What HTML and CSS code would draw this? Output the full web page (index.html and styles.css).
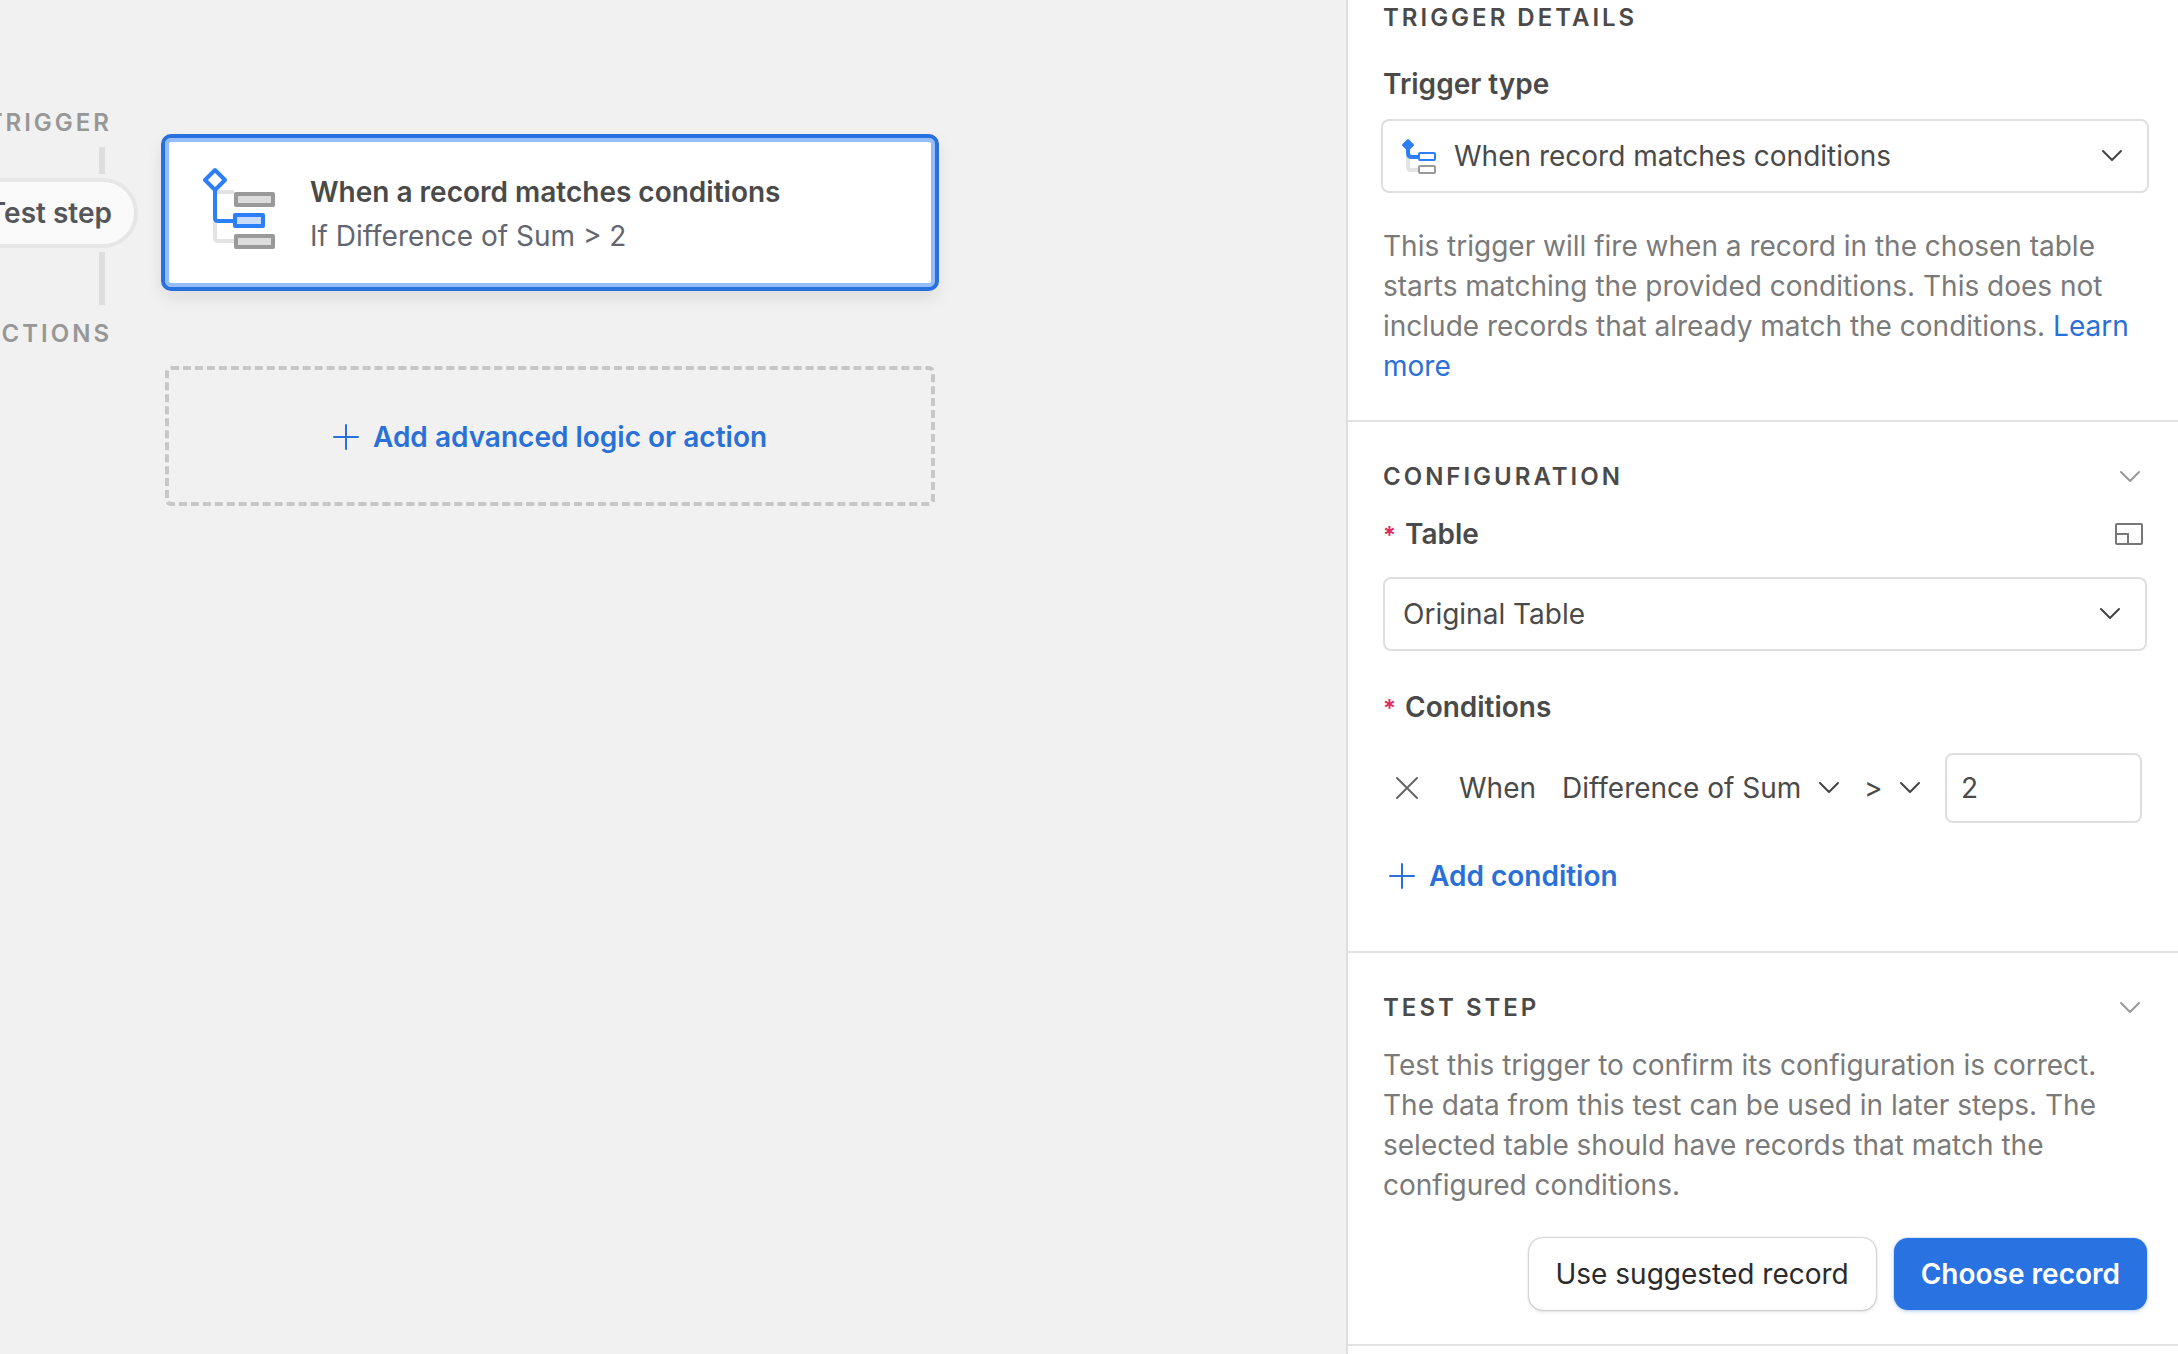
FILE: index.html
```
<!DOCTYPE html>
<html lang="en">
<head>
    <meta charset="UTF-8">
    <meta name="viewport" content="width=device-width, initial-scale=1.0">
    <title>Automation</title>
    <link rel="stylesheet" href="styles.css">
</head>
<body>
    <main class="canvas">
      <div class="rail">
        <span class="rail-label">TRIGGER</span>
        <div class="rail-line"></div>
        <button type="button" class="test-step">Test step</button>
        <div class="rail-line rail-line-long"></div>
        <span class="rail-label">ACTIONS</span>
      </div>
      <div class="steps">
        <button type="button" class="step-card">
          <svg class="step-icon" width="78" height="93" viewBox="0 0 78 93" fill="none">
            <path d="M15 26H34M15 26V72Q15 75 18 75H34" stroke="#e3e3e3" stroke-width="4"/>
            <path d="M15 24V52Q15 55 18 55H34" stroke="#2d7ff9" stroke-width="4"/>
            <path d="M15 4L25 14L15 24L5 14Z" fill="#fff" stroke="#2d7ff9" stroke-width="4" stroke-linejoin="round"/>
            <rect x="36" y="28" width="37" height="11" fill="#dcdcdc" stroke="#999" stroke-width="4" stroke-linejoin="round"/>
            <rect x="35" y="49" width="28" height="11" fill="#c9dcfd" stroke="#2d7ff9" stroke-width="4" stroke-linejoin="round"/>
            <rect x="36" y="70" width="37" height="11" fill="#dcdcdc" stroke="#999" stroke-width="4" stroke-linejoin="round"/>
          </svg>
          <span class="step-text">
            <span class="step-title">When a record matches conditions</span>
            <span class="step-detail">If Difference of Sum &gt; 2</span>
          </span>
        </button>
        <button type="button" class="add-action">
          <svg width="26" height="26" viewBox="0 0 26 26"><path d="M13 1V25M1 13H25" stroke="currentColor" stroke-width="2" stroke-linecap="round"/></svg>
          Add advanced logic or action
        </button>
      </div>
    </main>

    <aside class="panel">
      <section class="section section-first">
        <h2 class="section-title">TRIGGER DETAILS</h2>
        <label class="field-label trigger-label" for="trigger-type">Trigger type</label>
        <div class="select-box trigger-box">
          <svg class="trigger-icon" width="38" height="42" viewBox="0 0 38 42" fill="none">
            <path d="M9 20V32Q9 35 12 35H20" stroke="#e3e3e3" stroke-width="4"/>
            <path d="M9 10V18Q9 22 13 22H20" stroke="#2d7ff9" stroke-width="4"/>
            <path d="M9 5L14 10L9 15L4 10Z" fill="#2d7ff9" stroke="#2d7ff9" stroke-width="2" stroke-linejoin="round"/>
            <rect x="20" y="18" width="16" height="7" rx="1" fill="#fff" stroke="#2d7ff9" stroke-width="2"/>
            <rect x="20" y="31" width="16" height="7" rx="1" fill="#fff" stroke="#999" stroke-width="2"/>
          </svg>
          <select id="trigger-type" class="select">
            <option>When record matches conditions</option>
          </select>
          <svg class="chevron" width="22" height="14" viewBox="0 0 22 14"><path d="M2 2L11 11L20 2"/></svg>
        </div>
        <p class="help">This trigger will fire when a record in the chosen table starts matching the provided conditions. This does not include records that already match the conditions. <a class="link" href="#">Learn more</a></p>
      </section>

      <section class="section">
        <div class="section-head">
          <h2 class="section-title">CONFIGURATION</h2>
          <button type="button" class="icon-button" aria-label="Collapse configuration">
            <svg class="chevron-light" width="22" height="14" viewBox="0 0 22 14"><path d="M2 2L11 11L20 2"/></svg>
          </button>
        </div>
        <div class="field-head">
          <label class="field-label" for="table"><span class="required">*</span>Table</label>
          <button type="button" class="icon-button icon-expand" aria-label="Expand table">
            <svg width="30" height="24" viewBox="0 0 30 24" fill="none" stroke="#777" stroke-width="2"><rect x="2" y="2" width="26" height="20" rx="1"/><path d="M2 12H14V22"/></svg>
          </button>
        </div>
        <div class="select-box table-box">
          <select id="table" class="select">
            <option>Original Table</option>
          </select>
          <svg class="chevron" width="22" height="14" viewBox="0 0 22 14"><path d="M2 2L11 11L20 2"/></svg>
        </div>
        <div class="field-label conditions-label"><span class="required">*</span>Conditions</div>
        <div class="condition">
          <button type="button" class="icon-button remove" aria-label="Remove condition">
            <svg width="24" height="24" viewBox="0 0 24 24"><path d="M2 2L22 22M22 2L2 22" stroke="#666" stroke-width="2" stroke-linecap="round"/></svg>
          </button>
          <span class="when">When</span>
          <div class="inline-box">
            <select class="inline-select" aria-label="Field">
              <option>Difference of Sum</option>
            </select>
            <svg class="chevron chevron-inline" width="22" height="14" viewBox="0 0 22 14"><path d="M2 2L11 11L20 2"/></svg>
          </div>
          <div class="inline-box">
            <select class="inline-select" aria-label="Operator">
              <option>&gt;</option>
            </select>
            <svg class="chevron chevron-inline" width="22" height="14" viewBox="0 0 22 14"><path d="M2 2L11 11L20 2"/></svg>
          </div>
          <input class="value" type="text" aria-label="Value" value="2">
        </div>
        <button type="button" class="add-condition">
          <svg width="26" height="26" viewBox="0 0 26 26"><path d="M13 1V25M1 13H25" stroke="currentColor" stroke-width="2" stroke-linecap="round"/></svg>
          Add condition
        </button>
      </section>

      <section class="section section-test">
        <div class="section-head">
          <h2 class="section-title">TEST STEP</h2>
          <button type="button" class="icon-button" aria-label="Collapse test step">
            <svg class="chevron-light" width="22" height="14" viewBox="0 0 22 14"><path d="M2 2L11 11L20 2"/></svg>
          </button>
        </div>
        <p class="help test-help">Test this trigger to confirm its configuration is correct. The data from this test can be used in later steps. The selected table should have records that match the configured conditions.</p>
        <div class="buttons">
          <button type="button" class="button">Use suggested record</button>
          <button type="button" class="button button-primary">Choose record</button>
        </div>
      </section>
    </aside>
</body>
</html>
```
FILE: styles.css
```
* {
  box-sizing: border-box;
}

body {
  display: flex;
  min-height: 100vh;
  margin: 0;
  overflow: hidden;
  background-color: #f1f1f1;
  color: #4a4a4a;
  font-family: Inter, "Liberation Sans", sans-serif;
  font-size: 28px;
  line-height: 40px;
}

button,
input,
select {
  margin: 0;
  padding: 0;
  border: none;
  background: none;
  color: inherit;
  font: inherit;
}

button {
  cursor: pointer;
}

svg {
  display: block;
  flex: none;
}

/* ------CANVAS------- */
.canvas {
  display: flex;
  flex: 1;
  align-items: flex-start;
  gap: 23px;
  min-width: 0;
}

.rail {
  display: flex;
  flex: none;
  flex-direction: column;
  align-items: flex-end;
  width: 138px;
  padding-top: 111px;
}

.rail-label {
  margin-right: 26px;
  color: #979797;
  font-size: 24px;
  font-weight: 600;
  line-height: 24px;
  letter-spacing: 3px;
}

.rail-line {
  width: 6px;
  height: 27px;
  margin: 12px 33px 4px;
  background-color: #dedede;
}

.rail-line-long {
  height: 53px;
  margin: 4px 33px 17px;
}

.test-step {
  height: 70px;
  padding: 0 22px;
  border: 4px solid #e6e6e6;
  border-radius: 35px;
  background-color: #fafafa;
  color: #55565a;
  font-weight: 600;
  white-space: nowrap;
}

.steps {
  display: flex;
  flex: 0 1 778px;
  flex-direction: column;
  gap: 75px;
  padding-top: 134px;
}

.step-card {
  display: flex;
  align-items: center;
  gap: 32px;
  height: 157px;
  padding: 0 35px;
  border: 4px solid #2970df;
  border-radius: 10px;
  background-color: #fff;
  box-shadow: inset 0 0 0 4px #94bdfa, 0 8px 16px rgba(0, 0, 0, 0.08);
  text-align: left;
}

.step-text {
  display: flex;
  flex-direction: column;
  gap: 4px;
  padding-top: 2px;
}

.step-title {
  font-weight: 600;
}

.step-detail {
  color: #616670;
}

.add-action {
  display: flex;
  align-items: center;
  justify-content: center;
  gap: 14px;
  height: 140px;
  margin: 0 4px;
  padding-top: 1px;
  border: 4px dashed #c6c7c9;
  border-radius: 6px;
  color: #2970d8;
  font-weight: 600;
}

/* ------PANEL------- */
.panel {
  flex: 0 0 832px;
  min-width: 0;
  border-left: 2px solid #dfdfdf;
  background-color: #fff;
}

.section {
  padding: 43px 31px 55px 35px;
  border-bottom: 2px solid #e2e2e2;
}

.section-first {
  padding-top: 6px;
  padding-bottom: 34px;
}

.section-test {
  padding-bottom: 34px;
}

.section-head,
.field-head {
  display: flex;
  align-items: center;
  justify-content: space-between;
}

.section-title {
  margin: 0;
  font-size: 24px;
  font-weight: 600;
  line-height: 24px;
  letter-spacing: 3px;
}

.icon-button {
  padding: 0 6px;
}

.icon-expand {
  padding: 0 3px;
}

.chevron,
.chevron-light {
  fill: none;
  stroke: #444;
  stroke-width: 2;
  stroke-linecap: round;
  stroke-linejoin: round;
}

.chevron-light {
  stroke: #999;
}

.field-label {
  display: block;
  font-weight: 600;
}

.trigger-label {
  margin-top: 34px;
}

.field-head {
  margin-top: 25px;
}

.conditions-label {
  margin-top: 36px;
}

.required {
  display: inline-block;
  width: 22px;
  color: #dc2b5f;
  font-size: 24px;
  line-height: 24px;
}

.select-box {
  position: relative;
  margin-top: 23px;
}

.trigger-box {
  margin: 15px -2px 0;
}

.select {
  width: 100%;
  height: 74px;
  padding: 0 80px 0 18px;
  border: 2px solid #dfdfdf;
  border-radius: 8px;
  appearance: none;
}

.trigger-box .select {
  padding-left: 71px;
}

/* icons drawn over the select boxes */
.select-box .chevron {
  position: absolute;
  top: 30px;
  right: 26px;
  pointer-events: none;
}

.trigger-icon {
  position: absolute;
  top: 16px;
  left: 18px;
  pointer-events: none;
}

.help {
  margin: 33px 0 0;
  color: #7a7a7a;
}

.test-help {
  margin-top: 25px;
}

.link {
  color: #2970d8;
  text-decoration: none;
}

/* ------CONDITIONS------- */
.condition {
  display: flex;
  align-items: center;
  gap: 24px;
  margin-top: 26px;
  padding: 0 5px 0 6px;
}

.when {
  margin: 0 2px 0 10px;
}

.inline-box {
  position: relative;
}

.inline-select {
  height: 40px;
  padding-right: 38px;
  appearance: none;
}

.chevron-inline {
  position: absolute;
  top: 13px;
  right: 0;
  pointer-events: none;
}

.value {
  flex: 1;
  min-width: 0;
  height: 70px;
  padding: 0 14px;
  border: 2px solid #dfdfdf;
  border-radius: 8px;
}

.add-condition {
  display: flex;
  align-items: center;
  gap: 14px;
  margin-top: 33px;
  padding: 0 6px;
  color: #2970d8;
  font-weight: 600;
}

/* ------BUTTONS------- */
.buttons {
  display: flex;
  justify-content: flex-end;
  gap: 18px;
  margin-top: 33px;
}

.button {
  height: 72px;
  padding: 0 27px;
  border-radius: 14px;
  box-shadow: 0 0 2px rgba(0, 0, 0, 0.5), 0 2px 4px rgba(0, 0, 0, 0.1);
  color: #2b2b2b;
}

.button-primary {
  background-color: #2872e1;
  box-shadow: 0 0 2px rgba(40, 114, 225, 0.5), 0 2px 4px rgba(40, 114, 225, 0.2);
  color: #fff;
  font-weight: 600;
}
```
